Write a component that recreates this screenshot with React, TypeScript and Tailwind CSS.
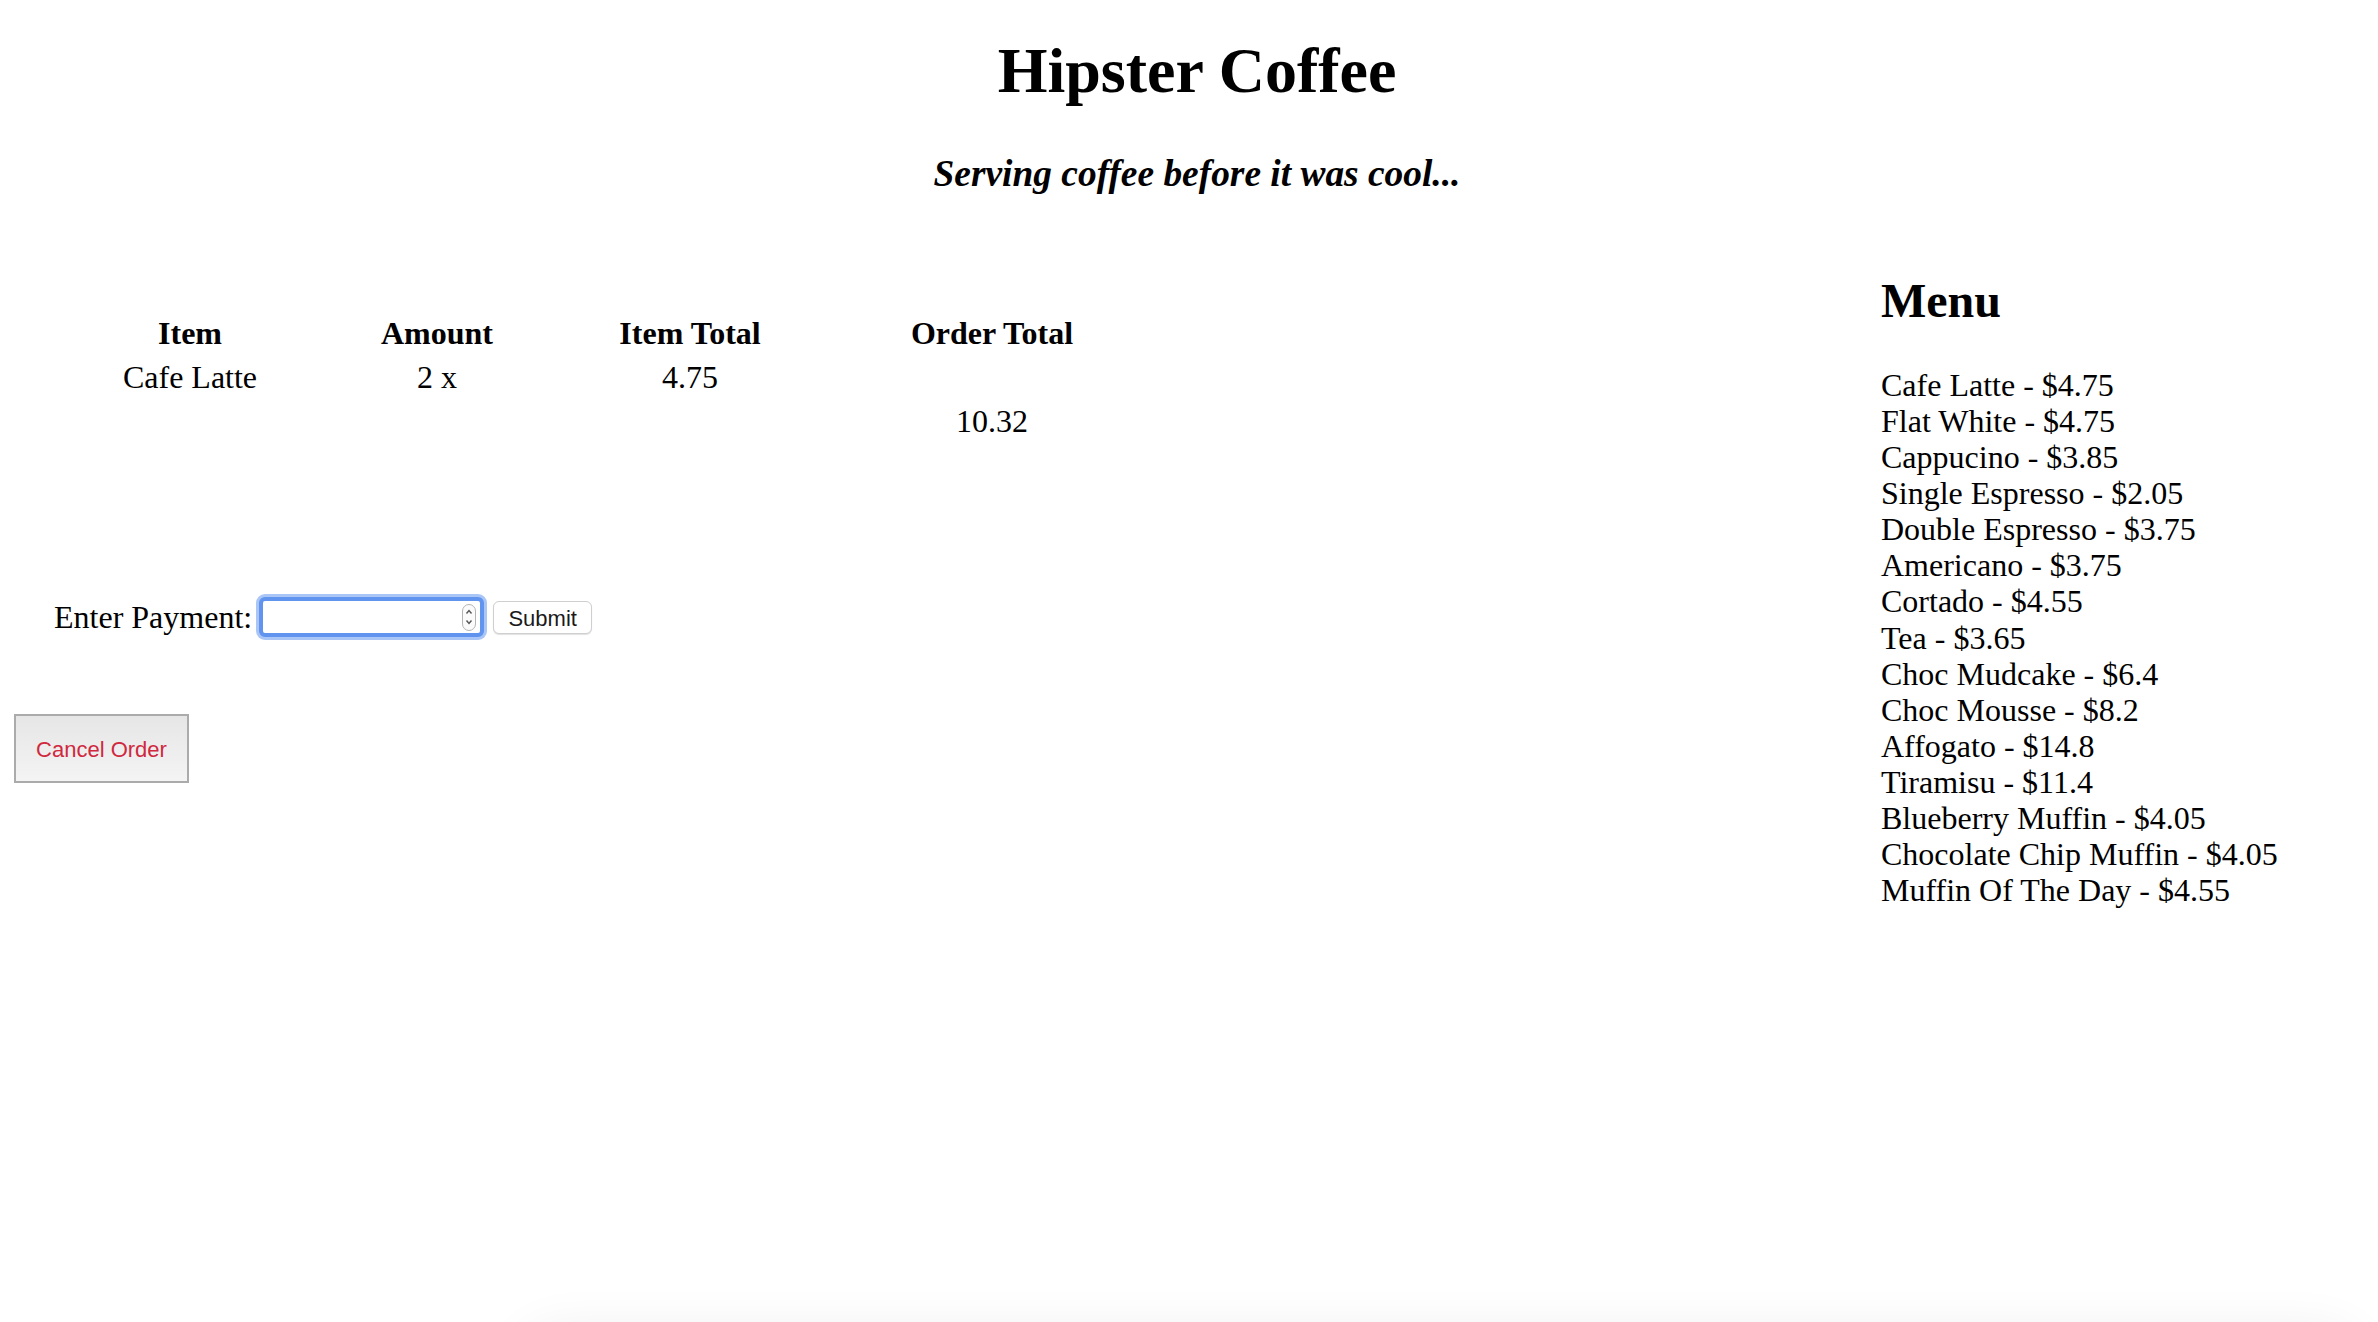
import { useState } from 'react'

interface MenuItem {
  name: string
  price: string
}

const menu: MenuItem[] = [
  { name: 'Cafe Latte', price: '4.75' },
  { name: 'Flat White', price: '4.75' },
  { name: 'Cappucino', price: '3.85' },
  { name: 'Single Espresso', price: '2.05' },
  { name: 'Double Espresso', price: '3.75' },
  { name: 'Americano', price: '3.75' },
  { name: 'Cortado', price: '4.55' },
  { name: 'Tea', price: '3.65' },
  { name: 'Choc Mudcake', price: '6.4' },
  { name: 'Choc Mousse', price: '8.2' },
  { name: 'Affogato', price: '14.8' },
  { name: 'Tiramisu', price: '11.4' },
  { name: 'Blueberry Muffin', price: '4.05' },
  { name: 'Chocolate Chip Muffin', price: '4.05' },
  { name: 'Muffin Of The Day', price: '4.55' },
]

const serif = "font-['Liberation_Serif','Times_New_Roman',serif]"

export default function App() {
  const [payment, setPayment] = useState('')

  return (
    <div className={`relative min-h-[1322px] overflow-hidden bg-white text-black ${serif}`}>
      {/* Header */}
      <div className="pl-[16px] text-center">
        <h1 className="mt-[35px] text-[64px] leading-[72px] font-bold">Hipster Coffee</h1>
        <h3 className="mt-[45px] text-[37.4px] leading-[44px] font-bold italic">
          Serving coffee before it was cool...
        </h3>
      </div>

      <div className="flex justify-between">
        {/* Order */}
        <div className="flex-1">
          <div className="mt-[115px] ml-[60px] grid grid-cols-[260px_234px_272px_332px] text-center text-[32px] leading-[44px]">
            <div className="font-bold">Item</div>
            <div className="font-bold">Amount</div>
            <div className="font-bold">Item Total</div>
            <div className="font-bold">Order Total</div>

            <div>Cafe Latte</div>
            <div>2 x</div>
            <div>4.75</div>
            <div></div>

            <div></div>
            <div></div>
            <div></div>
            <div>10.32</div>
          </div>

          {/* Payment */}
          <div className="mt-[151px] ml-[54px] flex h-[46px] items-center">
            <label className="text-[32px] leading-[36px]">Enter Payment:</label>
            <div className="ml-[4px] h-[46px] w-[231px] rounded-[9px] bg-[#aac6f6] p-[3px]">
              <div className="flex h-full items-center rounded-[6px] border-[4px] border-[#6094ee] bg-white pr-[4px]">
                <input
                  type="text"
                  value={payment}
                  onChange={(e) => setPayment(e.target.value)}
                  className="h-full min-w-0 flex-1 bg-transparent px-1 text-[26px] outline-none"
                />
                <div className="flex h-[27px] w-[14px] flex-col items-center justify-center rounded-full border border-[#b4b4b4] bg-[#fbfbfb]">
                  <svg width="8" height="20" viewBox="0 0 8 20" fill="none" stroke="#555" strokeWidth="1.4">
                    <path d="M1.5 6.5 L4 3.5 L6.5 6.5" />
                    <path d="M1.5 13.5 L4 16.5 L6.5 13.5" />
                  </svg>
                </div>
              </div>
            </div>
            <button className="ml-[6px] h-[33px] w-[99px] rounded-[6px] border border-[#cfcfcf] bg-white font-['Liberation_Sans',Arial,sans-serif] text-[22px] text-[#1a1a1a] shadow-[0_1px_1px_rgba(0,0,0,0.12)]">
              Submit
            </button>
          </div>

          {/* Cancel */}
          <button className="mt-[74px] ml-[14px] h-[69px] w-[175px] border-2 border-[#ababab] bg-gradient-to-b from-[#e6e6e6] to-[#f4f4f4] pt-[2px] font-['Liberation_Sans',Arial,sans-serif] text-[22px] text-[#d0283e]">
            Cancel Order
          </button>
        </div>

        {/* Menu */}
        <div className="w-[497px]">
          <h2 className="mt-[77px] text-[48px] leading-[56px] font-bold">Menu</h2>
          <ul className="mt-[38px] text-[32px] leading-[36.08px]">
            {menu.map((item) => (
              <li key={item.name}>
                {item.name} - ${item.price}
              </li>
            ))}
          </ul>
        </div>
      </div>

      {/* faint shadow at the bottom edge */}
      <div className="absolute top-[1330px] left-[520px] h-[120px] w-[1840px] rounded-[40px] bg-white shadow-[0_0_50px_rgba(0,0,0,0.07)]"></div>
    </div>
  )
}
